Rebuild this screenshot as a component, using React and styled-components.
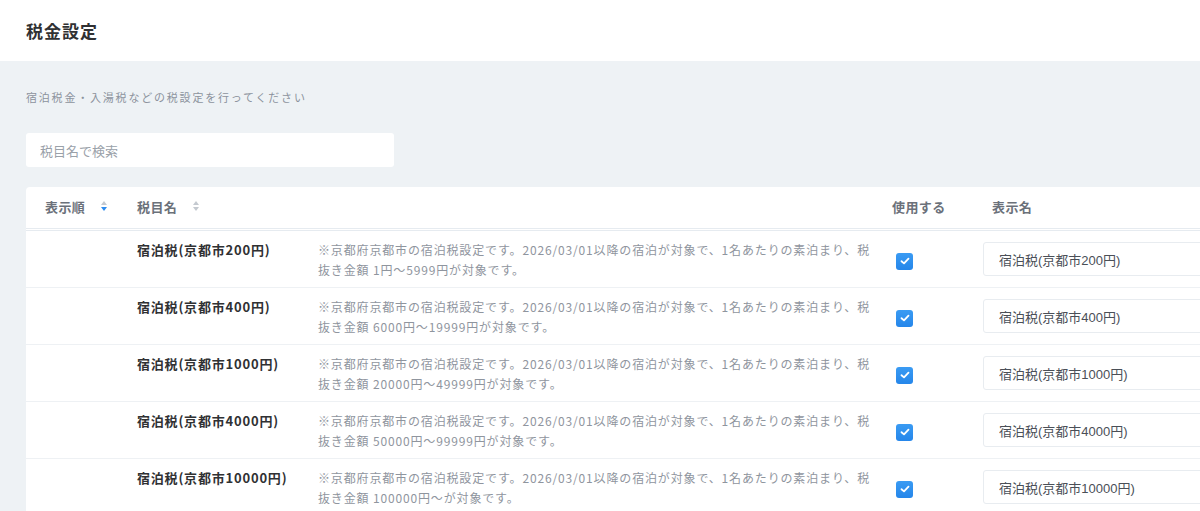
import React from "react";
import styled, { createGlobalStyle } from "styled-components";

const GlobalStyle = createGlobalStyle`
  html, body {
    margin: 0;
    padding: 0;
    overflow: hidden;
    background: #eef2f5;
  }
  body {
    font-family: "Noto Sans CJK JP", "Noto Sans", sans-serif;
    color: #303133;
  }
`;

const PageHeader = styled.header`
  height: 61px;
  background: #fff;
  display: flex;
  align-items: center;
  padding: 0 26px;
  box-sizing: border-box;

  h1 {
    margin: 0;
    font-size: 17px;
    font-weight: 700;
    letter-spacing: 1px;
    color: #303133;
  }
`;

const Content = styled.main`
  padding: 24px 0 0 26px;
`;

const Lead = styled.p`
  margin: 0;
  font-size: 11px;
  line-height: 24px;
  letter-spacing: 1.8px;
  color: #8c939d;
`;

const SearchBox = styled.input`
  display: block;
  margin-top: 24px;
  width: 368px;
  height: 34px;
  box-sizing: border-box;
  border: none;
  border-radius: 3px;
  padding: 0 14px;
  font-family: "Noto Sans CJK JP", sans-serif;
  font-size: 13px;
  background: #fff;
  outline: none;

  &::placeholder {
    color: #9aa1a9;
  }
`;

const Card = styled.section`
  margin-top: 20px;
  width: 1300px;
  background: #fff;
  border-radius: 4px 0 0 0;
`;

const Row = styled.div`
  display: grid;
  grid-template-columns: 111px 181px 574px 91px 1fr;
  align-items: center;
  box-sizing: border-box;
`;

const HeadRow = styled(Row)`
  height: 44px;
  border-bottom: 3px double #e6ebf0;
`;

const BodyRow = styled(Row)`
  height: 57px;
  border-bottom: 1px solid #eef1f4;
`;

const HeadCell = styled.div`
  display: flex;
  align-items: center;
  gap: 16px;
  font-size: 13px;
  font-weight: 700;
  letter-spacing: 0.4px;
  color: #6b717a;
  padding-left: ${(p) => p.$pad || 0}px;
  padding-bottom: 3px;
`;

const SortIcon = styled.span`
  display: inline-flex;
  flex-direction: column;
  gap: 2px;

  &::before,
  &::after {
    content: "";
    width: 0;
    height: 0;
    border-left: 3px solid transparent;
    border-right: 3px solid transparent;
  }
  &::before {
    border-bottom: 4px solid #c4c9d0;
  }
  &::after {
    border-top: 4px solid ${(p) => (p.$active ? "#2d8cf0" : "#c4c9d0")};
  }
`;

const NameCell = styled.div`
  align-self: start;
  padding-top: 9px;
  font-size: 13px;
  line-height: 20px;
  font-weight: 700;
  letter-spacing: 0.8px;
  color: #303133;
  white-space: nowrap;
`;

const Desc = styled.div`
  font-size: 12px;
  line-height: 20px;
  letter-spacing: 0.85px;
  color: #8f959e;
  white-space: nowrap;
  padding-top: 1px;
`;

const Check = styled.span`
  margin-left: 4px;
  margin-top: 4px;
  width: 17px;
  height: 17px;
  border-radius: 3px;
  background: linear-gradient(#3a9bf3, #2586ea);
  display: flex;
  align-items: center;
  justify-content: center;
`;

const NameInput = styled.input`
  width: 250px;
  height: 34px;
  box-sizing: border-box;
  border: 1px solid #e8ecf0;
  border-radius: 3px;
  padding: 0 15px;
  font-family: "Liberation Sans", "Noto Sans CJK JP", sans-serif;
  font-size: 13px;
  color: #4a4f57;
  background: #fff;
  outline: none;
`;

const taxes = [
  { amount: "200", range: "1円～5999円" },
  { amount: "400", range: "6000円～19999円" },
  { amount: "1000", range: "20000円～49999円" },
  { amount: "4000", range: "50000円～99999円" },
  { amount: "10000", range: "100000円～" },
];

function TaxRow({ amount, range }) {
  const name = `宿泊税(京都市${amount}円)`;
  return (
    <BodyRow>
      <div />
      <NameCell>{name}</NameCell>
      <Desc>
        ※京都府京都市の宿泊税設定です。2026/03/01以降の宿泊が対象で、1名あたりの素泊まり、税
        <br />
        抜き金額 {range}が対象です。
      </Desc>
      <div>
        <Check>
          <svg width="10" height="8" viewBox="0 0 10 8">
            <path d="M1.5 4.2 L4 6.4 L8.5 1.6" fill="none" stroke="#fff" strokeWidth="1.8" strokeLinecap="round" strokeLinejoin="round" />
          </svg>
        </Check>
      </div>
      <div>
        <NameInput defaultValue={name} />
      </div>
    </BodyRow>
  );
}

export default function App() {
  return (
    <>
      <GlobalStyle />
      <PageHeader>
        <h1>税金設定</h1>
      </PageHeader>
      <Content>
        <Lead>宿泊税金・入湯税などの税設定を行ってください</Lead>
        <SearchBox placeholder="税目名で検索" />
        <Card>
          <HeadRow>
            <HeadCell $pad={19}>
              表示順 <SortIcon $active />
            </HeadCell>
            <HeadCell>
              税目名 <SortIcon />
            </HeadCell>
            <div />
            <HeadCell>使用する</HeadCell>
            <HeadCell $pad={9}>表示名</HeadCell>
          </HeadRow>
          {taxes.map((t) => (
            <TaxRow key={t.amount} {...t} />
          ))}
        </Card>
      </Content>
    </>
  );
}
